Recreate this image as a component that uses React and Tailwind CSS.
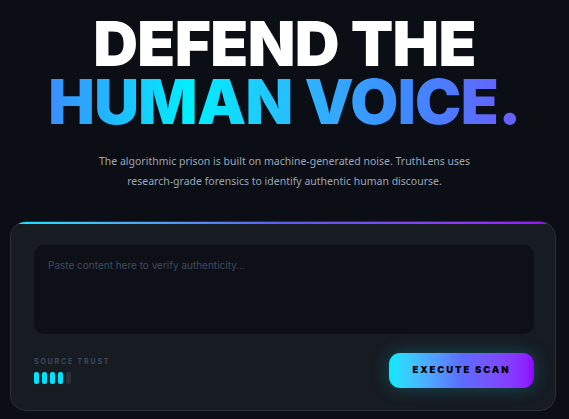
export default function App() {
  const bars = [true, true, true, true, false];
  return (
    <div className="min-h-screen w-full bg-[#0b0e14] px-[10px] pt-[15px] pb-[10px] font-['Inter',sans-serif]">
      {/* Hero */}
      <div className="flex flex-col items-center text-center">
        <h1 className="text-[62px] font-black leading-[58px] tracking-[-0.01em]">
          <span className="block text-white">DEFEND THE</span>
          <span className="block bg-[linear-gradient(90deg,#3b8cff_0%,#00f0ff_30%,#2fb4ff_55%,#3d8bff_75%,#6b5cff_100%)] bg-clip-text text-transparent">
            HUMAN VOICE.
          </span>
        </h1>
        <p className="mt-[20px] font-['Noto_Sans',sans-serif] text-[10.5px] leading-[20px] text-[#9aa6b8]">
          The algorithmic prison is built on machine-generated noise. TruthLens uses
          <br />
          research-grade forensics to identify authentic human discourse.
        </p>
      </div>

      {/* Scan card */}
      <div className="relative mt-[30px] mr-[3px] overflow-hidden rounded-[16px] border border-[#2a2f38] bg-[#171b22] pt-[23px] pr-[21px] pb-[22px] pl-[23px]">
        <div className="absolute inset-x-0 top-0 h-[2px] bg-gradient-to-r from-[#00e5ff] via-[#5b5cf0] to-[#9b00ff]" />
        <div className="h-[89px] rounded-[10px] bg-[#0d1017] px-[14px] pt-[13px] text-[10px] text-[#3d4b60]">
          Paste content here to verify authenticity...
        </div>
        <div className="mt-[19px] flex items-center justify-between">
          <div className="flex flex-col gap-[5px]">
            <span className="text-[7px] font-bold tracking-[0.26em] text-[#3f4a5b]">SOURCE TRUST</span>
            <div className="flex gap-[3px]">
              {bars.map((on, i) => (
                <div
                  key={i}
                  className={on ? 'h-[12px] w-[5px] rounded-[2px] bg-[#00e5ff]' : 'h-[12px] w-[5px] rounded-[2px] bg-[#2a2f38]'}
                />
              ))}
            </div>
          </div>
          <button className="flex h-[35px] w-[145px] items-center justify-center rounded-[11px] bg-gradient-to-r from-[#00eaff] via-[#5b6cff] to-[#9000ff] text-[9.5px] font-black tracking-[0.2em] text-black shadow-[0_0_18px_rgba(0,229,255,0.25)]">
            EXECUTE SCAN
          </button>
        </div>
      </div>
    </div>
  );
}
